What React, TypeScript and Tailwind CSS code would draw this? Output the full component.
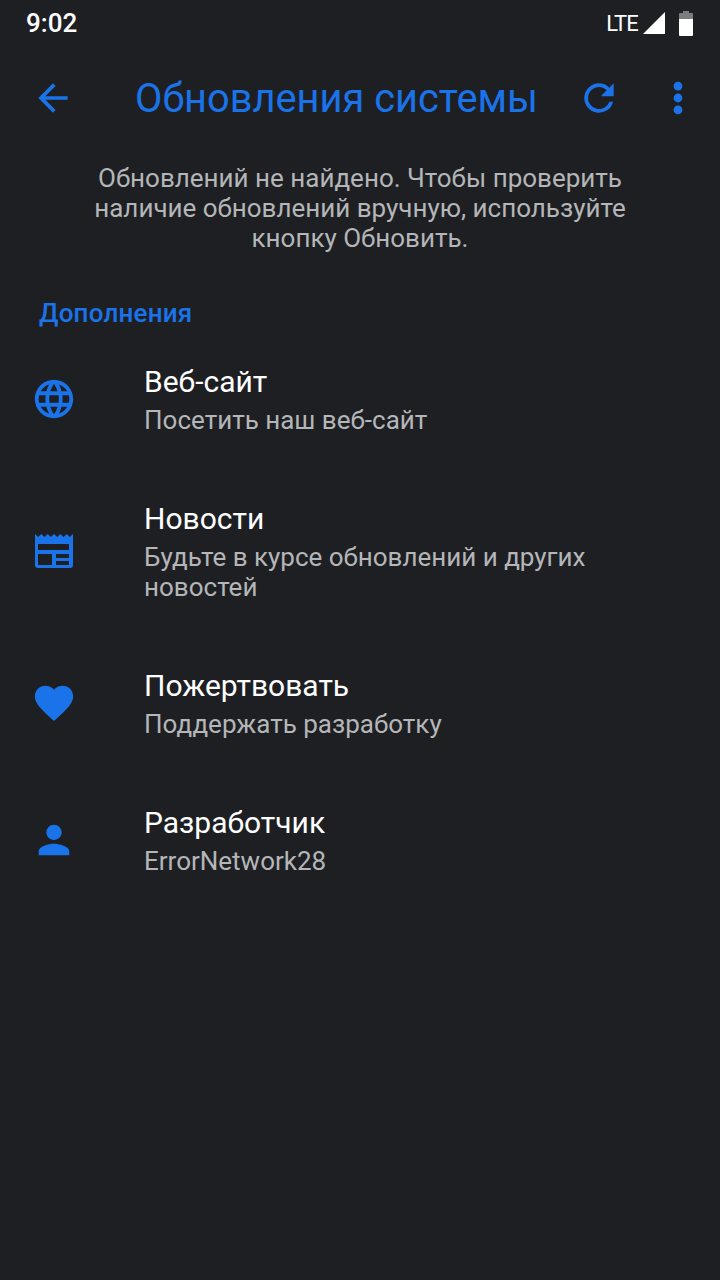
import type { ReactNode } from 'react';

const font = { fontFamily: 'Roboto, sans-serif' };

function Row({ icon, title, sub }: { icon: ReactNode; title: string; sub: ReactNode }) {
  return (
    <div className="flex items-center">
      <div className="w-[144px] pl-[31px] shrink-0">{icon}</div>
      <div>
        <div className="text-[30px] leading-[38px] text-white">{title}</div>
        <div className="mt-[4px] text-[26px] leading-[30px] text-[#b4b6b8]">{sub}</div>
      </div>
    </div>
  );
}

export default function App() {
  return (
    <div className="w-[720px] h-[1280px] bg-[#1e1f23] overflow-hidden" style={font}>
      <div className="h-[46px] flex items-center pl-[26px]">
        <span className="text-[26px] font-medium text-white">9:02</span>
        <span className="ml-[529px] w-[31px] text-[22px] text-white tracking-[-1px] whitespace-nowrap">LTE</span>
        <svg width="24" height="24" viewBox="0 0 24 24" className="ml-[5px]"><path d="M23 1v22H1z" fill="#fff" /></svg>
        <svg width="14" height="25" viewBox="0 0 14 25" className="ml-[13px]">
          <path d="M4 0h6v2h3a1 1 0 0 1 1 1v5H0V3a1 1 0 0 1 1-1h3z" fill="#7b7c7e" />
          <path d="M0 8h14v16a1 1 0 0 1-1 1H1a1 1 0 0 1-1-1z" fill="#fff" />
        </svg>
      </div>
      <div className="h-[104px] flex items-center text-[#1a73e8]">
        <svg width="44" height="44" viewBox="0 0 24 24" className="ml-[31px]" fill="currentColor"><path d="M20 11H7.83l5.59-5.59L12 4l-8 8 8 8 1.41-1.41L7.83 13H20z" /></svg>
        <div className="text-[39.8px] leading-[48px] mt-[2px] ml-[60px] w-[442px] whitespace-nowrap">Обновления системы</div>
        <svg width="44" height="44" viewBox="0 0 24 24" fill="currentColor"><path d="M17.65 6.35A7.96 7.96 0 0 0 12 4a8 8 0 1 0 7.73 10h-2.08A6 6 0 1 1 12 6c1.66 0 3.14.69 4.22 1.78L13 11h7V4z" /></svg>
        <svg width="44" height="44" viewBox="0 0 24 24" fill="currentColor" className="ml-[35px]"><circle cx="12" cy="5.5" r="2.4" /><circle cx="12" cy="12" r="2.4" /><circle cx="12" cy="18.5" r="2.4" /></svg>
      </div>
      <div className="mt-[13px] text-center text-[26px] leading-[30px] text-[#b4b6b8]">
        <div>Обновлений не найдено. Чтобы проверить</div>
        <div>наличие обновлений вручную, используйте</div>
        <div>кнопку Обновить.</div>
      </div>
      <div className="mt-[45px] ml-[39px] text-[26px] leading-[30px] font-medium text-[#1a73e8] tracking-[0.2px]">Дополнения</div>
      <div className="mt-[35px] flex flex-col gap-[65px]">
        <Row
          title="Веб-сайт"
          sub="Посетить наш веб-сайт"
          icon={<svg width="46" height="46" viewBox="0 0 24 24" fill="#1a73e8"><path d="M11.99 2C6.47 2 2 6.48 2 12s4.47 10 9.99 10C17.52 22 22 17.52 22 12S17.52 2 11.99 2zm6.93 6h-2.95a15.65 15.65 0 0 0-1.38-3.56A8.03 8.03 0 0 1 18.92 8zM12 4.04c.83 1.2 1.48 2.53 1.91 3.96h-3.82c.43-1.43 1.08-2.76 1.91-3.96zM4.26 14C4.1 13.36 4 12.69 4 12s.1-1.36.26-2h3.38c-.08.66-.14 1.32-.14 2s.06 1.34.14 2H4.26zm.82 2h2.95c.32 1.25.78 2.45 1.38 3.56A7.987 7.987 0 0 1 5.08 16zm2.95-8H5.08a7.987 7.987 0 0 1 4.33-3.56A15.65 15.65 0 0 0 8.03 8zM12 19.96c-.83-1.2-1.48-2.53-1.91-3.96h3.82c-.43 1.43-1.08 2.76-1.91 3.96zM14.34 14H9.66c-.09-.66-.16-1.32-.16-2s.07-1.35.16-2h4.68c.09.65.16 1.32.16 2s-.07 1.34-.16 2zm.25 5.56c.6-1.11 1.06-2.31 1.38-3.56h2.95a8.03 8.03 0 0 1-4.33 3.56zM16.36 14c.08-.66.14-1.32.14-2s-.06-1.34-.14-2h3.38c.16.64.26 1.31.26 2s-.1 1.36-.26 2h-3.38z" /></svg>}
        />
        <Row
          title="Новости"
          sub={<>Будьте в курсе обновлений и других<br />новостей</>}
          icon={<svg width="38" height="34" viewBox="0 0 38 34" fill="#1a73e8" className="ml-[4px]"><path fillRule="evenodd" d="M0 0l3.2 3L6.3 0l3.2 3L12.7 0l3.1 3L19 0l3.2 3L25.3 0l3.2 3L31.7 0l3.1 3L38 0v31a3 3 0 0 1-3 3H3a3 3 0 0 1-3-3zM3 10v6h31v-6zM3 20v11h14V20zM21 20v4h13v-4zM21 27v4h13v-4z" /></svg>}
        />
        <Row
          title="Пожертвовать"
          sub="Поддержать разработку"
          icon={<svg width="46" height="46" viewBox="0 0 24 24" fill="#1a73e8"><path d="M12 21.35l-1.45-1.32C5.4 15.36 2 12.28 2 8.5 2 5.42 4.42 3 7.5 3c1.74 0 3.41.81 4.5 2.09C13.09 3.81 14.76 3 16.5 3 19.58 3 22 5.42 22 8.5c0 3.78-3.4 6.86-8.55 11.54L12 21.35z" /></svg>}
        />
        <Row
          title="Разработчик"
          sub="ErrorNetwork28"
          icon={<svg width="46" height="46" viewBox="0 0 24 24" fill="#1a73e8"><path d="M12 12c2.21 0 4-1.79 4-4s-1.79-4-4-4-4 1.79-4 4 1.79 4 4 4zm0 2c-2.67 0-8 1.34-8 4v2h16v-2c0-2.66-5.33-4-8-4z" /></svg>}
        />
      </div>
    </div>
  );
}
